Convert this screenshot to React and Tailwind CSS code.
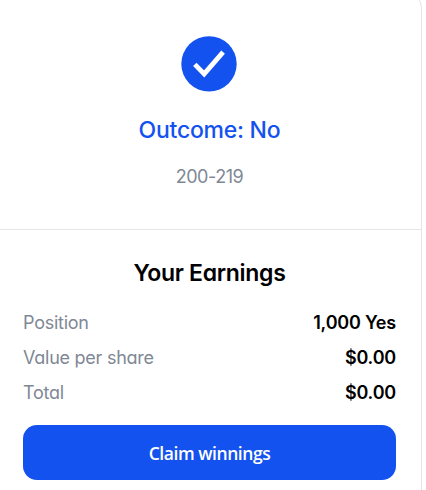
const earnings = [
  { label: 'Position', value: '1,000 Yes' },
  { label: 'Value per share', value: '$0.00' },
  { label: 'Total', value: '$0.00' },
];

const CheckBadge = () => (
  <svg className="mr-px h-14 w-14" viewBox="0 0 56 56" fill="none">
    <circle cx="28" cy="27.9" r="27.7" fill="#1452F0" />
    <path d="M13.8 28.4L23.2 37.9L42.1 16.2" stroke="white" strokeWidth="4.8" />
  </svg>
);

const EarningsRow = ({ label, value }) => (
  <div className="flex h-[35px] items-center justify-between text-[18px]">
    <span className="tracking-[-0.25px] text-[#7F8895]">{label}</span>
    <span className="font-[580] tracking-[-0.2px] text-black">{value}</span>
  </div>
);

export default function App() {
  return (
    <div className="h-[490px] overflow-hidden bg-white font-['Inter',sans-serif] [font-feature-settings:'cv11']">
      {/* The card runs past the top, left and bottom of the window */}
      <div className="-mt-2 -ml-[3px] h-[520px] w-[425px] rounded-2xl border border-[#E5E5E5]">
        <section className="flex h-[237px] flex-col items-center pt-[43px]">
          <CheckBadge />
          <h2 className="mt-[22px] text-[23px] leading-8 font-[450] tracking-[-0.25px] text-[#1452F0]">Outcome: No</h2>
          <p className="mt-[19px] text-[18px] leading-6 tracking-[-0.45px] text-[#7F8895]">200-219</p>
        </section>

        <section className="-mt-px border-t border-[#E5E5E5] px-[25px] pt-[27px]">
          <h3 className="mb-[16px] text-center text-[23px] leading-8 font-semibold tracking-[-0.3px] text-black">
            Your Earnings
          </h3>
          {earnings.map((row) => (
            <EarningsRow key={row.label} {...row} />
          ))}
          <button className="mt-[15px] h-[55px] w-full rounded-[14px] bg-[#1452F0] pt-0.5 font-['Open_Sans',sans-serif] text-[17.5px] font-semibold tracking-[-0.45px] text-white">
            Claim winnings
          </button>
        </section>
      </div>
    </div>
  );
}
